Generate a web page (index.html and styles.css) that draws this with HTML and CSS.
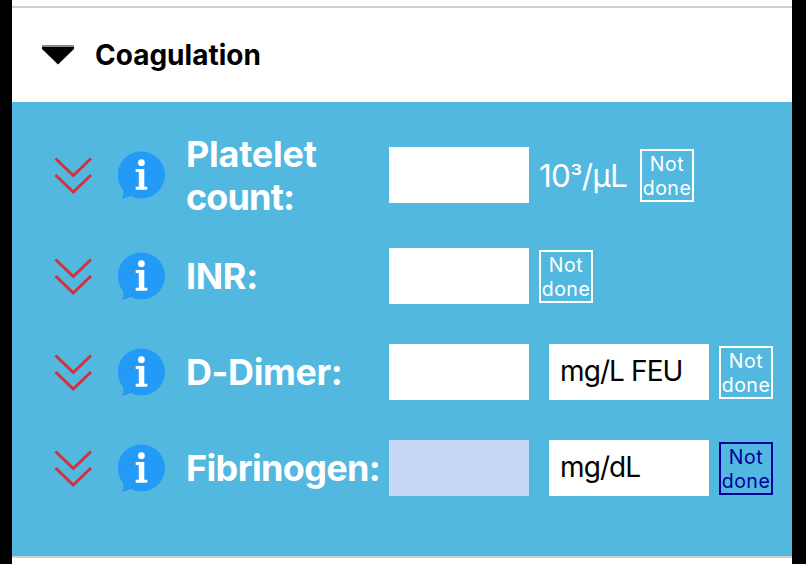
FILE: index.html
```
<!DOCTYPE html>
<html lang="en">
<head>
<meta charset="utf-8">
<title>Coagulation</title>
<link rel="stylesheet" href="styles.css">
</head>
<body>
<svg width="0" height="0" class="defs" aria-hidden="true">
  <symbol id="chevrons" viewBox="0 0 38 38">
    <path d="M1.500 2.500 L19.300 19.500 L37 2.500 M1.500 19 L19.300 36 L37 19" fill="none" stroke="#d43238" stroke-width="3"/>
  </symbol>
  <symbol id="info" viewBox="0 0 48 48">
    <path d="M23.500 .5 A23.5 23.5 0 1 1 12.500 44.800 Q8.500 47.200 3.800 47.700 Q6 43.700 5.300 39.200 A23.500 23.500 0 0 1 23.500 .5Z" fill="#2399f8"/>
    <circle cx="23.400" cy="11.700" r="3.400" fill="#fff"/>
    <path d="M17.700 18 H26.300 V35.700 H29.300 V38.700 H17.700 V35.700 H20.800 V20.900 H17.700Z" fill="#fff"/>
  </symbol>
</svg>
<main class="page">
  <header class="header">
    <svg class="caret" viewBox="0 0 32 20"><path d="M0 1 H32 V4 L16 19.500 L0 4Z" fill="#000"/><path d="M0 1 H32" stroke="#888" stroke-width="2"/></svg>
    <h1>Coagulation</h1>
  </header>
  <section class="panel">
    <div class="row tall">
      <svg class="chev"><use href="#chevrons"/></svg>
      <svg class="info"><use href="#info"/></svg>
      <div class="label"><span class="platelet">Platelet</span><br><span class="count">count:</span></div>
      <div class="field"></div>
      <span class="unit">10<span class="cube">³</span>/µL</span>
      <div class="done">Not<br>done</div>
    </div>
    <div class="row">
      <svg class="chev"><use href="#chevrons"/></svg>
      <svg class="info"><use href="#info"/></svg>
      <div class="label inr">INR:</div>
      <div class="field"></div>
      <div class="done">Not<br>done</div>
    </div>
    <div class="row">
      <svg class="chev"><use href="#chevrons"/></svg>
      <svg class="info"><use href="#info"/></svg>
      <div class="label dimer">D-Dimer:</div>
      <div class="field"></div>
      <div class="select feu">mg/L FEU</div>
      <div class="done">Not<br>done</div>
    </div>
    <div class="row">
      <svg class="chev"><use href="#chevrons"/></svg>
      <svg class="info"><use href="#info"/></svg>
      <div class="label fib">Fibrinogen:</div>
      <div class="field off"></div>
      <div class="select">mg/dL</div>
      <div class="done active">Not<br>done</div>
    </div>
  </section>
</main>
</body>
</html>
```
FILE: styles.css
```
* { box-sizing: border-box; }
body { margin: 0; background: #000; font-family: Inter, "Liberation Sans", sans-serif; }
.defs { position: absolute; }
.page { height: 564px; margin: 0 14px 0 12px; padding-top: 6px; background: #fff; overflow: hidden; }
.header { height: 96px; border-top: 2px solid #d0d0d0; display: flex; align-items: center; padding-left: 30px; }
.caret { width: 32px; height: 20px; margin-right: 21px; }
h1 { margin: 0; font-size: 28px; font-weight: 700; line-height: 34px; letter-spacing: 0; }
.panel { height: 456px; background: #52b8df; border-bottom: 2px solid #d0d0d0; padding: 20px 0 0 42px; }
.row { display: flex; align-items: center; height: 96px; }
.row.tall { height: 106px; }
.chev { width: 38px; height: 38px; margin-right: 26px; }
.info { width: 48px; height: 48px; margin-right: 20px; }
.label { width: 203px; padding-top: 1px; color: #fff; font-size: 36px; font-weight: 700; line-height: 43px; letter-spacing: -.85px; white-space: nowrap; }
.platelet { letter-spacing: -.25px; }
.inr { letter-spacing: -.35px; }
.dimer { letter-spacing: -.4px; }
.fib { letter-spacing: -.65px; }
.field { width: 140px; height: 56px; background: #fff; margin-right: 10px; }
.field.off { background: #c7d7f6; }
.unit { width: 101px; color: #fff; font-size: 31.5px; font-weight: 400; letter-spacing: -.7px; white-space: nowrap; }
.cube { font-size: 27px; line-height: 1; }
.select { width: 160px; height: 56px; margin: 0 10px; padding-left: 11px; background: #fff; font-size: 28px; line-height: 55px; letter-spacing: -.9px; white-space: nowrap; }
.done { width: 54px; height: 53px; padding-top: 1px; border: 2px solid #fff; color: #fff; font-size: 19.5px; line-height: 24px; letter-spacing: .5px; text-align: center; white-space: nowrap; }
.done.active { color: #00009c; border-color: #00009c; }
```
